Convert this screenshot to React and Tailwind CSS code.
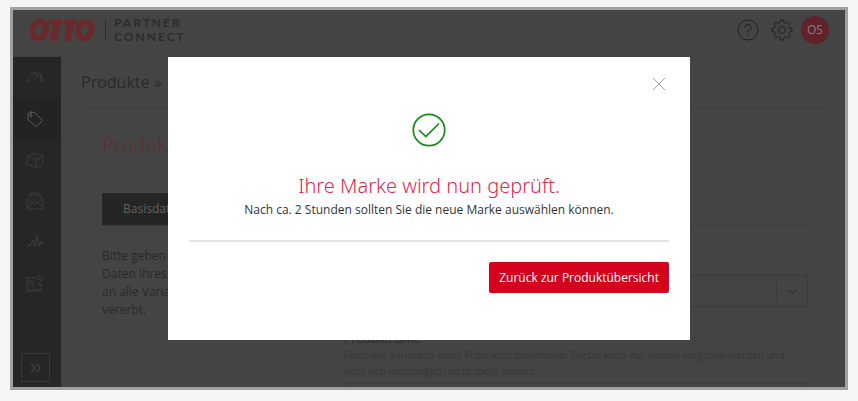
import { ChevronDown, ChevronsRight } from "lucide-react";

export default function App() {
  return (
    <div className="h-screen flex flex-col bg-[#f5f5f5] px-2.5 pt-[7px] pb-[11px] font-['Open_Sans','Noto_Sans',sans-serif]">
      <div className="relative flex-1 min-h-0 flex flex-col overflow-hidden border-3 border-[#a0a0a0] bg-[#444444]">
        <Header />
        <div className="flex-1 min-h-0 flex">
          <Sidebar />
          <ProductPage />
        </div>
        <BrandDialog />
      </div>
    </div>
  );
}

function Header() {
  return (
    <header className="h-[47px] shrink-0 flex items-center justify-between px-4 pb-1.5 border-b border-[#404040]">
      <div className="flex items-center">
        <svg className="w-[67px] h-6" viewBox="0 0 67 24" fill="none" stroke="#6c292b">
          <ellipse cx="10.500" cy="12" rx="6.500" ry="8.500" strokeWidth="6" transform="rotate(18 10.500 12)" />
          <path d="M20 4h13.500M35 4h14" strokeWidth="5" />
          <path d="M28.500 4 24.500 23M42 4 38 23" strokeWidth="7" />
          <ellipse cx="56" cy="12" rx="6.500" ry="8.500" strokeWidth="6" transform="rotate(18 56 12)" />
        </svg>
        <span className="w-px h-[22px] ml-[9px] mr-2 bg-[#2c2c2c]" />
        <span className="text-xs leading-[14px] font-bold tracking-[2px] text-[#2c2c2c] font-['Lato',sans-serif]">
          PARTNER
          <br />
          CONNECT
        </span>
      </div>
      <div className="flex items-center gap-3">
        <button aria-label="Hilfe" className="text-[#202020]">
          <svg className="w-[22px] h-[22px]" viewBox="0 0 22 22" fill="none" stroke="currentColor">
            <circle cx="11" cy="11" r="10" />
            <path d="M8 8.500a3 3 0 1 1 4.500 2.500c-1 .6-1.500 1-1.500 2.300M11 15v1.500" />
          </svg>
        </button>
        <button aria-label="Einstellungen" className="text-[#202020]">
          <svg className="w-[22px] h-[22px]" viewBox="0 0 22 22" fill="none" stroke="currentColor" strokeLinejoin="round">
            <path d="M9.500 1h3l.5 2.700 1.900.8 2.300-1.600 2 2-1.600 2.300.8 1.900 2.600.5v2.900l-2.600.5-.8 1.900 1.600 2.300-2 2-2.300-1.600-1.900.8-.5 2.600h-3L9 18.400l-1.900-.8-2.300 1.600-2-2 1.600-2.300-.8-1.900-2.600-.5V9.600l2.600-.5.8-1.900-1.600-2.300 2-2 2.300 1.600L9 3.700z" />
            <circle cx="11" cy="11" r="3.500" />
          </svg>
        </button>
        <button className="w-7 h-7 -ml-1 rounded-full bg-[#61222b] text-xs font-medium text-[#858083]">OS</button>
      </div>
    </header>
  );
}

const navItems = [
  {
    label: "Dashboard",
    icon: <path d="M1 12a8 8 0 0 1 15-4M1 12h4M7 12l7-7 1 8M5 9l2-3M9 4l3 5M14 12h3a8 8 0 0 0-2-6" />,
  },
  {
    label: "Produkte",
    active: true,
    icon: <path d="M2 3.500 8 2l8.500 8.500-6 6L2 9.500zM5 5a1 1 0 1 0 .1 0M5 5V1" />,
  },
  {
    label: "Bestellungen",
    icon: <path d="m1 5 8-3 8 3v8l-7 4-9-4zM1 5l9 4 7-4M10 9v8M5 3.500l8 4v3" />,
  },
  {
    label: "Belege",
    icon: <path d="M3 7V3h12v4M3 3l3-2h6l3 2M1 7v9M17 7v9M1 7l8 5 8-5M1 16l6-5M17 16l-5-5M5 5l8 7M13 5l-8 7M0 17h18" />,
  },
  {
    label: "Statistik",
    icon: <path d="M1 15l2-4 1 3 3-7 2 7 2-12 2 11 2-5 1 3 2-1" />,
  },
  {
    label: "Marktplatz",
    icon: <path d="M1 4h9M1 4v12h14v-6M1 7h8M4 7v5M7 7v5l3 3M10 9h4M12 12l3-2M11 3l2-2 4 3-2 3zM0 17h16" />,
  },
];

function Sidebar() {
  return (
    <nav className="w-12 shrink-0 flex flex-col bg-[#262626]">
      {navItems.map((item) => (
        <a
          key={item.label}
          href="#"
          aria-label={item.label}
          className={`h-[41px] flex items-center justify-center pr-1 ${
            item.active ? "bg-[#232323] text-[#5c5c5c]" : "text-[#3b3b3b]"
          }`}
        >
          <svg className="w-[18px] h-[18px]" viewBox="0 0 18 18" fill="none" stroke="currentColor">
            {item.icon}
          </svg>
        </a>
      ))}
      <button
        aria-label="Menü ausklappen"
        className="w-[29px] h-[29px] mt-auto mb-[5px] ml-2 flex items-center justify-center border border-[#383838] text-[#464646]"
      >
        <ChevronsRight size={18} strokeWidth={1.5} />
      </button>
    </nav>
  );
}

function ProductPage() {
  return (
    <main className="flex-1 px-4 text-[#2a2a2a]">
      <div className="ml-1 h-[51px] flex items-center border-b border-[#3e3e3e] text-base">Produkte »</div>
      <section className="pl-[25px] pr-[21px] pt-[25px]">
        <h1 className="text-xl leading-6 font-light text-[#622c30]">Produktdaten</h1>
        <div className="mt-9 border-b border-[#3c3c3c]">
          <button className="h-8 px-[21px] bg-[#252525] text-xs text-[#626262]">Basisdaten</button>
        </div>
        <div className="mt-[21px] flex">
          <p className="w-[242px] shrink-0 text-xs leading-[18px]">
            Bitte geben
            <br />
            Daten ihres
            <br />
            an alle Varianten
            <br />
            vererbt.
          </p>
          <div className="flex-1 pt-7">
            <div className="relative">
              <select
                aria-label="Marke"
                className="w-full h-8 appearance-none rounded-xs border border-[#3a3a3a]"
              />
              <span className="pointer-events-none absolute right-0 inset-y-1.5 w-8 flex items-center justify-center border-l border-[#3a3a3a]">
                <ChevronDown size={13} className="text-[#303030]" />
              </span>
            </div>
            <label htmlFor="productname" className="block mt-6 text-xs leading-4">
              Produktname
            </label>
            <p className="text-[10px] leading-4 text-[#363636]">
              Fasst alle Varianten eines Produktes zusammen. Dieser kann nur einmal vergeben werden und
              <br />
              lässt sich nachträglich nicht mehr ändern.
            </p>
            <input id="productname" className="block mt-1 w-full h-8 border border-[#3e3e3e]" />
          </div>
        </div>
      </section>
    </main>
  );
}

function BrandDialog() {
  return (
    <div className="absolute inset-0 flex items-start justify-center pt-[47px]">
      <div
        role="dialog"
        aria-labelledby="dialog-title"
        className="w-full max-w-[522px] bg-white px-[21px] pt-5 pb-[47px]"
      >
        <div className="flex justify-end pr-[3px]">
          <button aria-label="Schließen" className="text-[#a3a3a3]">
            <svg className="w-3.5 h-3.5" viewBox="0 0 14 14" fill="none" stroke="currentColor">
              <path d="m1 1 12 12M13 1 1 13" />
            </svg>
          </button>
        </div>
        <div className="mt-[22px] text-center">
          <svg className="mx-auto w-[34px] h-[34px]" viewBox="0 0 34 34" fill="none" stroke="#138a13" strokeWidth="1.700">
            <circle cx="17" cy="17" r="15.700" />
            <path d="m7 17 6.800 6.500L27 10.500" />
          </svg>
          <h2
            id="dialog-title"
            className="mt-[25px] text-xl leading-7 font-light text-[#e0284a] font-['Noto_Sans',sans-serif]"
          >
            Ihre Marke wird nun geprüft.
          </h2>
          <p className="text-xs leading-5 text-[#333333]">
            Nach ca. 2 Stunden sollten Sie die neue Marke auswählen können.
          </p>
        </div>
        <div className="mt-5 pt-5 flex justify-end border-t-2 border-[#e3e3e3]">
          <button className="h-[31px] px-2.5 rounded-xs bg-[#d4021d] text-xs text-white">
            Zurück zur Produktübersicht
          </button>
        </div>
      </div>
    </div>
  );
}
